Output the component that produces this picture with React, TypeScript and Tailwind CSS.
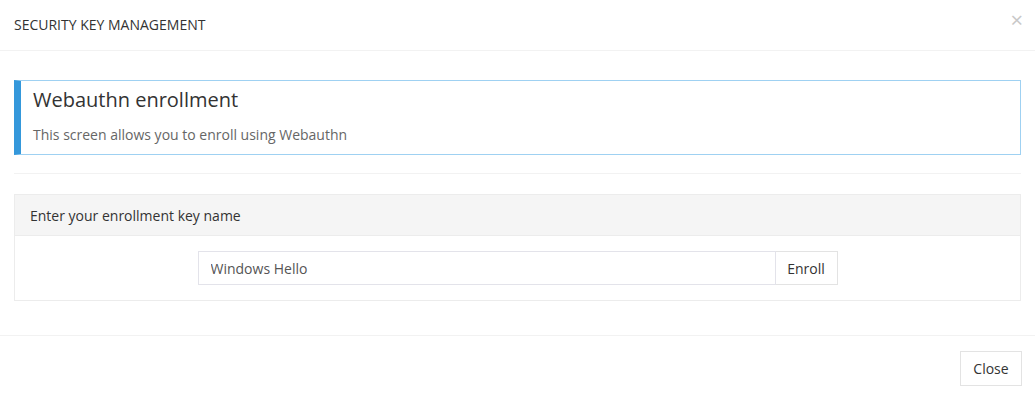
export default function App() {
  return (
    <div className="w-[1035px] h-[399px] bg-white font-['Open_Sans',sans-serif] text-[#333]">
      <header className="h-[51px] flex items-center justify-between pl-[14px] pr-[12px] border-b border-[#f2f2f2]">
        <h4 className="text-[14px] leading-5">SECURITY KEY MANAGEMENT</h4>
        <button className="text-[22px] leading-none text-[#c8c8c8] -mt-[12px]">×</button>
      </header>

      <section className="px-[14px] pt-[29px] pb-[34px] border-b border-[#f2f2f2]">
        <div className="h-[75px] border border-[#9fd1f2] border-l-[7px] border-l-[#3498db] pl-[12px] pt-[5px]">
          <h3 className="text-[20px] leading-7 text-[#333]">Webauthn enrollment</h3>
          <p className="text-[14px] leading-5 text-[#666] mt-[11px]">This screen allows you to enroll using Webauthn</p>
        </div>

        <hr className="mt-[18px] mb-[20px] border-t border-[#f2f2f2]" />

        <div className="border border-[#ececec]">
          <div className="h-[41px] bg-[#f5f5f5] border-b border-[#ececec] flex items-center px-[15px]">
            <span className="text-[14px]">Enter your enrollment key name</span>
          </div>
          <div className="h-[64px] flex items-center justify-center">
            <div className="flex w-[640px] h-[34px]">
              <input
                defaultValue="Windows Hello"
                className="flex-1 border border-[#e3e3ea] px-[12px] text-[14px] text-[#555] outline-none"
              />
              <button className="w-[62px] border border-l-0 border-[#e3e3e3] text-[14px] text-[#333] bg-white">Enroll</button>
            </div>
          </div>
        </div>
      </section>

      <footer className="flex justify-end pr-[13px] pt-[15px]">
        <button className="h-[35px] w-[62px] border border-[#e3e3e3] text-[14px] text-[#333] bg-white">Close</button>
      </footer>
    </div>
  );
}
